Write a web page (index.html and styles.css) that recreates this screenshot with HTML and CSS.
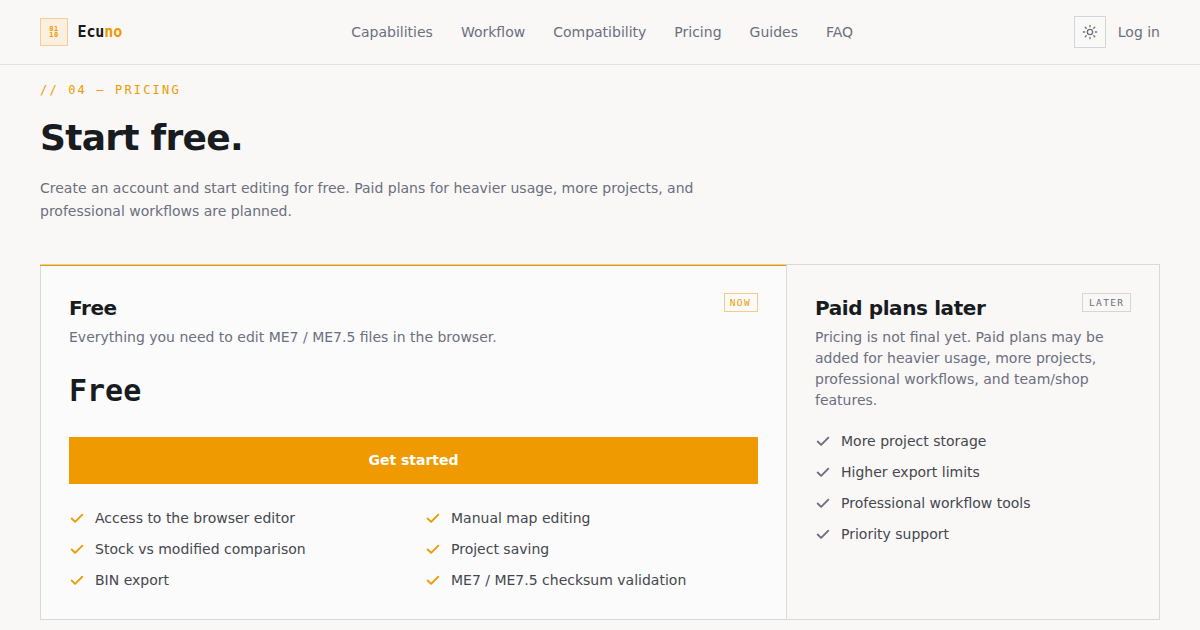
FILE: index.html
```html
<!DOCTYPE html>
<html lang="en">
<head>
<meta charset="utf-8">
<title>Ecuno</title>
<link rel="stylesheet" href="styles.css">
</head>
<body>
<svg class="defs" width="0" height="0"><symbol id="check" viewBox="0 0 24 24"><path d="M20 5.5 9.2 16.3 4 11.3"/></symbol></svg>
<header class="header">
  <a class="brand"><span class="logo"><span>01</span><span>10</span></span><span class="name">Ecu<b>no</b></span></a>
  <nav class="nav"><a>Capabilities</a><a>Workflow</a><a>Compatibility</a><a>Pricing</a><a>Guides</a><a>FAQ</a></nav>
  <div class="actions">
    <button class="theme"><svg viewBox="0 0 24 24"><circle cx="12" cy="12" r="4"/><path d="M12 2v2M12 20v2M4.93 4.93l1.41 1.41M17.66 17.66l1.41 1.41M2 12h2M20 12h2M6.34 17.66l-1.41 1.41M19.07 4.93l-1.41 1.41"/></svg></button>
    <a class="login">Log in</a>
  </div>
</header>
<main class="main">
  <p class="eyebrow">// 04 — PRICING</p>
  <h1 class="title">Start free.</h1>
  <p class="intro">Create an account and start editing for free. Paid plans for heavier usage, more projects, and professional workflows are planned.</p>
  <section class="plans">
    <article class="plan plan-free">
      <div class="head"><h2>Free</h2><span class="tag tag-now">NOW</span></div>
      <p class="desc">Everything you need to edit ME7 / ME7.5 files in the browser.</p>
      <p class="price">Free</p>
      <a class="cta">Get started</a>
      <ul class="list two">
        <li><svg><use href="#check"/></svg>Access to the browser editor</li>
        <li><svg><use href="#check"/></svg>Manual map editing</li>
        <li><svg><use href="#check"/></svg>Stock vs modified comparison</li>
        <li><svg><use href="#check"/></svg>Project saving</li>
        <li><svg><use href="#check"/></svg>BIN export</li>
        <li><svg><use href="#check"/></svg>ME7 / ME7.5 checksum validation</li>
      </ul>
    </article>
    <article class="plan plan-paid">
      <div class="head"><h2>Paid plans later</h2><span class="tag">LATER</span></div>
      <p class="desc">Pricing is not final yet. Paid plans may be added for heavier usage, more projects, professional workflows, and team/shop features.</p>
      <ul class="list">
        <li><svg><use href="#check"/></svg>More project storage</li>
        <li><svg><use href="#check"/></svg>Higher export limits</li>
        <li><svg><use href="#check"/></svg>Professional workflow tools</li>
        <li><svg><use href="#check"/></svg>Priority support</li>
      </ul>
    </article>
  </section>
</main>
</body>
</html>
```
FILE: styles.css
```css
* { box-sizing: border-box; margin: 0; padding: 0; }
body { height: 630px; overflow: hidden; background: #f9f8f6; color: #181b20; font: 14px/21px "DejaVu Sans", sans-serif; }
.defs { position: absolute; }
svg { fill: none; stroke: currentColor; stroke-width: 2; stroke-linecap: round; stroke-linejoin: round; }
.header { height: 65px; padding: 0 40px; display: flex; justify-content: space-between; align-items: center; border-bottom: 1px solid #e2e2e2; color: #6b6f7f; }
.brand { width: 90.5px; display: flex; align-items: center; gap: 9.5px; }
.logo { width: 28px; height: 28px; display: flex; flex-direction: column; align-items: center; justify-content: center; border: 1px solid #f5cf95; background: #fbf0e0; color: #ee9a00; font: bold 7px/6px "DejaVu Sans Mono", monospace; letter-spacing: 0.5px; }
.name { font: bold 15px/20px "DejaVu Sans Mono", monospace; letter-spacing: -0.1px; color: #181b20; }
.name b { color: #ee9a00; }
.nav { display: flex; gap: 28px; }
.actions { display: flex; justify-content: flex-end; align-items: center; gap: 12px; }
.theme { width: 32px; height: 32px; display: grid; place-items: center; border: 1px solid #d3d5d9; background: #f9f9f8; color: #6b6f7f; }
.theme svg { width: 16px; height: 16px; }
.main { padding: 16px 40px 0; }
.eyebrow { font: 12px/18px "DejaVu Sans Mono", monospace; letter-spacing: 2.16px; color: #ee9a00; }
.title { margin-top: 19px; font-size: 36px; line-height: 40px; letter-spacing: -0.72px; }
.intro { margin-top: 19px; width: 672px; line-height: 22.75px; color: #6b6f7f; }
.plans { margin-top: 41.5px; height: 356px; display: grid; grid-template-columns: 746px 1fr; border: 1px solid #d6d8da; }
.plan { padding: 28px; }
.plan-free { position: relative; background: #fbfbfb; border-right: 1px solid #d9dbdd; }
.plan-free::before { content: ""; position: absolute; inset: -1px 0 auto -1px; height: 2px; background: linear-gradient(#f3cf82 50%, #d99a22 50%); }
.head { display: flex; justify-content: space-between; align-items: flex-start; }
.head h2 { font-size: 20px; line-height: 30px; letter-spacing: -0.4px; }
.tag { padding: 0 5.5px; border: 1px solid #d3d5d9; color: #6b6f7f; font: 9.5px/17px "DejaVu Sans Mono", monospace; letter-spacing: 1.4px; }
.tag-now { color: #ee9a00; border: 1px solid #f5cb85; padding-left: 5px; padding-right: 6px; }
.desc { margin-top: 4px; color: #6b6f7f; }
.price { margin-top: 25px; font: bold 30px/36px "DejaVu Sans Mono", monospace; }
.cta { margin-top: 28px; height: 47px; display: flex; align-items: center; justify-content: center; background: #ee9a00; color: #fff; font-weight: bold; }
.list { margin-top: 20px; display: grid; gap: 10px; list-style: none; color: #45474e; }
.list li { display: flex; align-items: center; gap: 10px; }
.list svg { width: 16px; height: 16px; stroke-width: 2.8; color: #6b6f7f; }
.two { margin-top: 24px; grid-template-columns: 1fr 1fr; column-gap: 23px; }
.two svg { color: #ee9a00; }
```
